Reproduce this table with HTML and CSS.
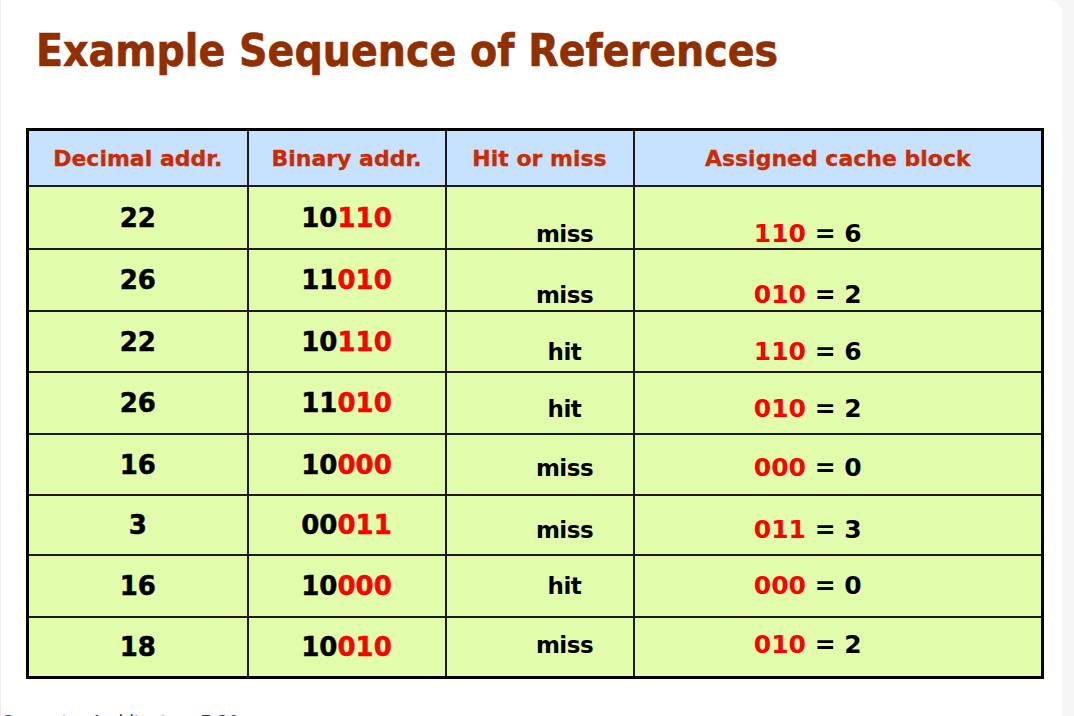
FILE: index.html
```html
<!DOCTYPE html>
<html lang="en">
<head>
<meta charset="utf-8">
<title>Example Sequence of References</title>
<link rel="stylesheet" href="styles.css">
</head>
<body>
<div class="slide">
  <h1 class="title">Example Sequence of References</h1>
  <table class="refs">
    <colgroup>
      <col class="c1"><col class="c2"><col class="c3"><col class="c4">
    </colgroup>
    <thead>
      <tr class="head">
        <th>Decimal addr.</th>
        <th>Binary addr.</th>
        <th>Hit or miss</th>
        <th>Assigned cache block</th>
      </tr>
    </thead>
    <tbody>
      <tr class="row h61 off-35">
        <td class="num">22</td>
        <td class="num">10<span class="red">110</span></td>
        <td class="tag hm">miss</td>
        <td class="tag blk"><span class="red">110</span> = 6</td>
      </tr>
      <tr class="row h62 off-33">
        <td class="num">26</td>
        <td class="num">11<span class="red">010</span></td>
        <td class="tag hm">miss</td>
        <td class="tag blk"><span class="red">010</span> = 2</td>
      </tr>
      <tr class="row h61 off-28">
        <td class="num">22</td>
        <td class="num">10<span class="red">110</span></td>
        <td class="tag hm">hit</td>
        <td class="tag blk"><span class="red">110</span> = 6</td>
      </tr>
      <tr class="row h62 off-24">
        <td class="num">26</td>
        <td class="num">11<span class="red">010</span></td>
        <td class="tag hm">hit</td>
        <td class="tag blk"><span class="red">010</span> = 2</td>
      </tr>
      <tr class="row h61 off-21">
        <td class="num">16</td>
        <td class="num">10<span class="red">000</span></td>
        <td class="tag hm">miss</td>
        <td class="tag blk"><span class="red">000</span> = 0</td>
      </tr>
      <tr class="row h60 off-22">
        <td class="num">3</td>
        <td class="num">00<span class="red">011</span></td>
        <td class="tag hm">miss</td>
        <td class="tag blk"><span class="red">011</span> = 3</td>
      </tr>
      <tr class="row h62 off-18">
        <td class="num">16</td>
        <td class="num">10<span class="red">000</span></td>
        <td class="tag hm">hit</td>
        <td class="tag blk"><span class="red">000</span> = 0</td>
      </tr>
      <tr class="row h60 off-15">
        <td class="num">18</td>
        <td class="num">10<span class="red">010</span></td>
        <td class="tag hm">miss</td>
        <td class="tag blk"><span class="red">010</span> = 2</td>
      </tr>
    </tbody>
  </table>
  <div class="footer">Computer Architecture 7-30</div>
</div>
</body>
</html>
```
FILE: styles.css
```css
html, body {
  margin: 0;
  padding: 0;
}
body {
  background: #f6f6f6;
  width: 1074px;
  height: 716px;
  overflow: hidden;
}
.slide {
  width: 1062px;
  height: 760px;
  background: #ffffff;
  border-top-right-radius: 14px;
  box-sizing: border-box;
  border-left: 1px solid #ececec;
  padding-top: 29px;
}
.title {
  margin: 0 0 0 35px;
  font-family: "DejaVu Sans Condensed", "DejaVu Sans", sans-serif;
  font-stretch: condensed;
  font-weight: bold;
  font-size: 44px;
  line-height: 44px;
  color: #912f00;
  white-space: nowrap;
  -webkit-text-stroke: 0.6px #912f00;
}
.refs {
  margin: 55px 0 0 25px;
  width: 1015px;
  table-layout: fixed;
  border-collapse: collapse;
  border: 3px solid #000;
}
.c1 { width: 220px; }
.c2 { width: 198px; }
.c3 { width: 188px; }
.c4 { width: 409px; }
.refs th, .refs td {
  border: 2px solid #1c1c1c;
  padding: 0;
  font-family: "DejaVu Sans", sans-serif;
  font-weight: bold;
  text-align: center;
}
.head th {
  height: 54px;
  background: #c6e2fe;
  color: #cc2a00;
  font-size: 22px;
  vertical-align: middle;
  -webkit-text-stroke: 0.3px #cc2a00;
}
.row td {
  background: #e1fdab;
  color: #000;
}
.h62 { height: 62px; }
.h61 { height: 61px; }
.h60 { height: 60px; }
.num {
  font-size: 26px;
  line-height: 32px;
  vertical-align: middle;
  -webkit-text-stroke: 0.5px currentColor;
}
.red { color: #ff0000; }
.tag {
  line-height: 28px;
  vertical-align: top;
  box-sizing: border-box;
}
.hm {
  font-size: 23px;
  letter-spacing: -0.5px;
  padding-left: 50px !important;
}
.blk {
  font-size: 25px;
  padding-right: 60px !important;
}
.off-35 .tag { padding-top: 33px; }
.off-33 .tag { padding-top: 31px; }
.off-28 .tag { padding-top: 26px; }
.off-24 .tag { padding-top: 22px; }
.off-22 .tag { padding-top: 20px; }
.off-21 .tag { padding-top: 19px; }
.off-18 .tag { padding-top: 16px; }
.off-15 .tag { padding-top: 13px; }
.footer {
  margin-top: 33px;
  font-family: "DejaVu Sans", sans-serif;
  font-size: 17px;
  line-height: 20px;
  color: #1a2fc8;
  white-space: nowrap;
}
```
